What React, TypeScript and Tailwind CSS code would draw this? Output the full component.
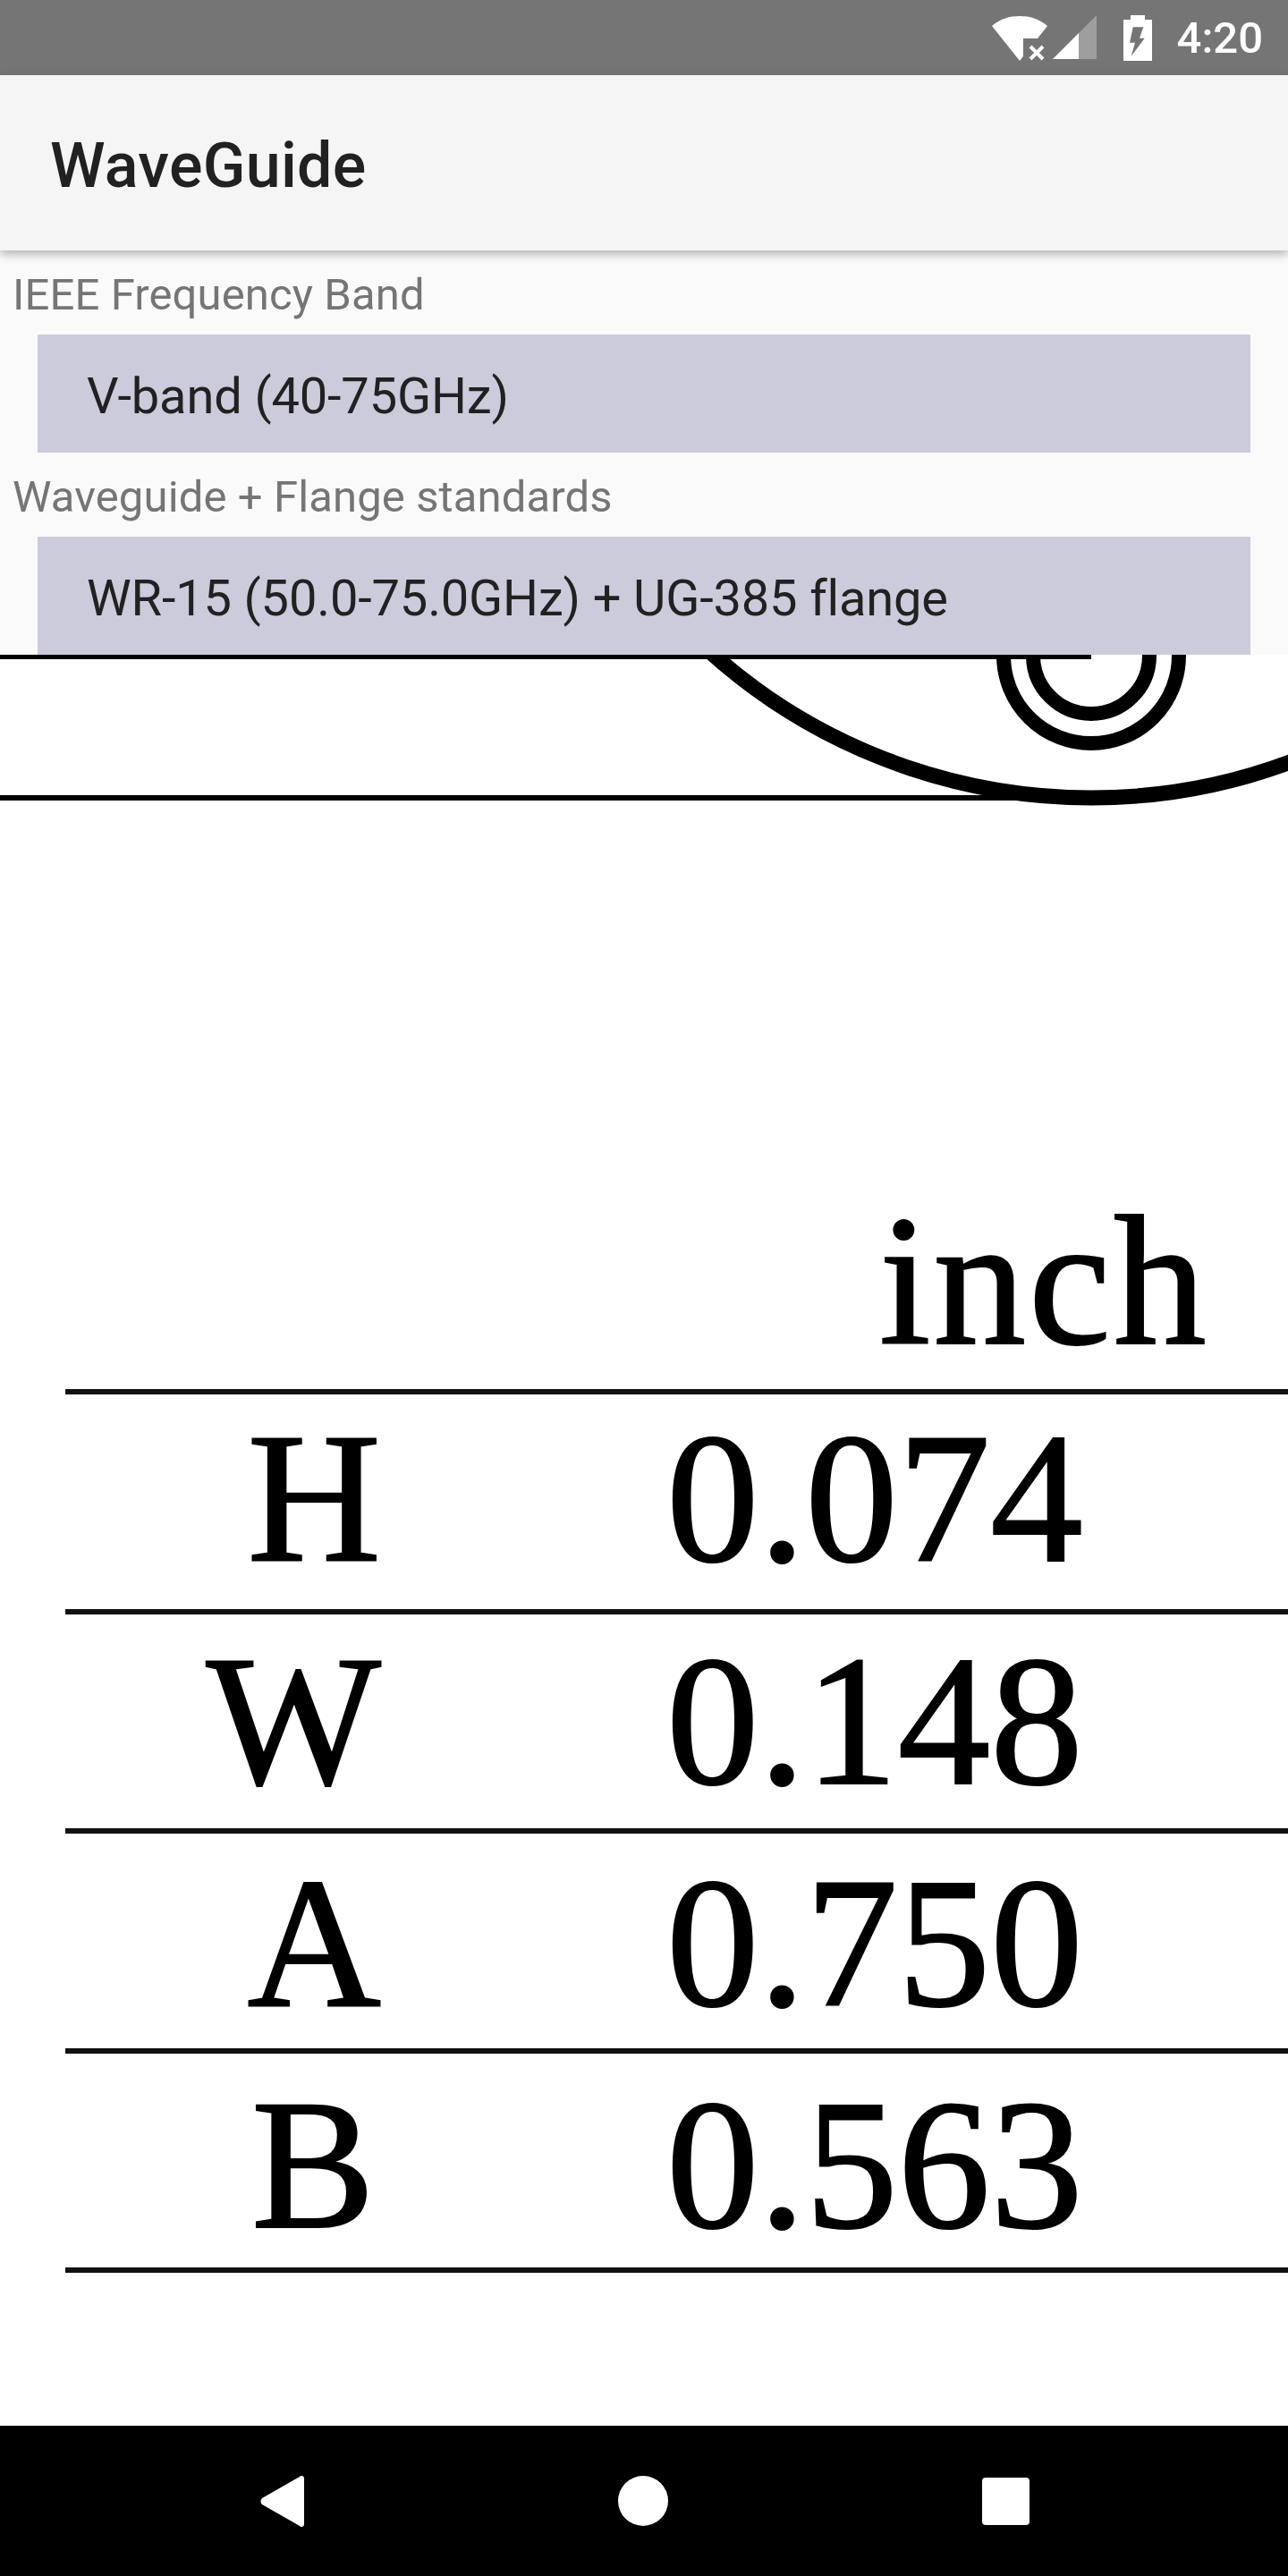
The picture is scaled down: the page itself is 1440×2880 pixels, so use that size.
const rows = [
  { label: 'H', value: '0.074', top: 'pt-[13px]', right: 'pr-0' },
  { label: 'W', value: '0.148', top: 'pt-[16px]', right: 'pr-0' },
  { label: 'A', value: '0.750', top: 'pt-[19px]', right: 'pr-0' },
  { label: 'B', value: '0.563', top: 'pt-[21px]', right: 'pr-[7px]' },
]

function StatusBar() {
  return (
    <div className="flex h-[84px] items-center justify-end bg-[#757575] pr-[28px] text-white">
      <svg width="62" height="50" viewBox="0 0 62 50" className="mt-[1px]" fill="#fff">
        <path d="M0 11C9 3 20 0 31 0s22 3 31 11L51 25H35v20l-4 5Z" />
        <path d="M43 34l7 7M57 34l-7 7M43 48l7-7M57 48l-7-7" stroke="#fff" strokeWidth="4" />
      </svg>
      <svg width="49" height="50" viewBox="0 0 49 50" className="ml-[6px]">
        <path d="M0 49 29 20V49Z" fill="#fff" />
        <path d="M29 20 49 0V49H29Z" fill="#fff" fillOpacity="0.3" />
      </svg>
      <svg width="32" height="51" viewBox="0 0 32 51" className="ml-[30px]">
        <path
          d="M8 0h16v5h8v46H0V5h8Z M10.700 13.300 7 30.700h6L8.700 45.700 23.700 25.700H18L22.300 13.300Z"
          fill="#fff"
          fillRule="evenodd"
        />
      </svg>
      <span className="ml-[28px] font-['Roboto',sans-serif] text-[49px] leading-none font-medium">4:20</span>
    </div>
  )
}

function AppBar() {
  return (
    <div className="relative z-10 flex h-[196px] items-center bg-[#f5f5f5] pt-[6px] pl-[56px] shadow-[0_4px_10px_rgba(0,0,0,0.3)]">
      <h1 className="font-['Roboto',sans-serif] text-[70px] leading-none font-medium tracking-[0.3px] text-[#212121]">
        WaveGuide
      </h1>
    </div>
  )
}

function Picker({ label, value }: { label: string; value: string }) {
  return (
    <div>
      <div className="h-[94px] pt-[17px] pl-[14px] text-[49px] leading-[66px] tracking-[0.12px] text-[#757575]">
        {label}
      </div>
      <div className="ml-[42px] flex h-[132px] w-[1356px] items-center bg-[#cccbdc] pt-[6px] pl-[55px] text-[56px] leading-none tracking-[-0.15px] text-[#212121]">
        {value}
      </div>
    </div>
  )
}

function FlangeDrawing() {
  return (
    <svg width="1440" height="174" viewBox="0 0 1440 174" className="block" fill="none" stroke="#000">
      <path d="M0 2.500H1220" strokeWidth="5" />
      <path d="M0 160H1150" strokeWidth="6" />
      <circle cx="1220" cy="-478" r="638" strokeWidth="17" />
      <circle cx="1220" cy="1" r="98" strokeWidth="16" />
      <circle cx="1220" cy="1" r="65" strokeWidth="16" />
    </svg>
  )
}

function DimensionTable() {
  return (
    <div className="font-['Liberation_Serif',serif] text-[207px] leading-none text-black [-webkit-text-stroke:2px_#000]">
      <div className="mt-[647px] flex h-[0px] items-end pl-[983px]">
        <span className="mb-[17px] inline-block tracking-[3px]">inch</span>
      </div>
      <div className="ml-[73px]">
        {rows.map((row) => (
          <div key={row.label} className={`flex h-[245.500px] border-t-[6px] border-[#111] ${row.top}`}>
            <div className={`w-[353px] text-right ${row.right}`}>{row.label}</div>
            <div className="pl-[319px]">{row.value}</div>
          </div>
        ))}
        <div className="border-t-[6px] border-[#111]" />
      </div>
    </div>
  )
}

function NavBar() {
  return (
    <div className="flex h-[168px] items-center justify-center gap-[351px] bg-black pl-[2px]">
      <svg width="49" height="57" viewBox="0 0 49 57" fill="#fff">
        <path d="M49 3c0-3-3-4-5-2L2 25c-2 2-2 5 0 7l42 24c2 2 5 1 5-2Z" />
      </svg>
      <div className="h-[56px] w-[56px] rounded-full bg-white" />
      <div className="h-[53px] w-[53px] rounded-[4px] bg-white" />
    </div>
  )
}

export default function App() {
  return (
    <div className="flex h-[2880px] w-[1440px] flex-col overflow-hidden bg-white font-['Roboto',sans-serif]">
      <StatusBar />
      <AppBar />
      <div className="bg-[#fafafa]">
        <Picker label="IEEE Frequency Band" value="V-band (40-75GHz)" />
        <Picker label="Waveguide + Flange standards" value="WR-15 (50.0-75.0GHz) + UG-385 flange" />
      </div>
      <div className="flex-1 bg-white">
        <FlangeDrawing />
        <DimensionTable />
      </div>
      <NavBar />
    </div>
  )
}
